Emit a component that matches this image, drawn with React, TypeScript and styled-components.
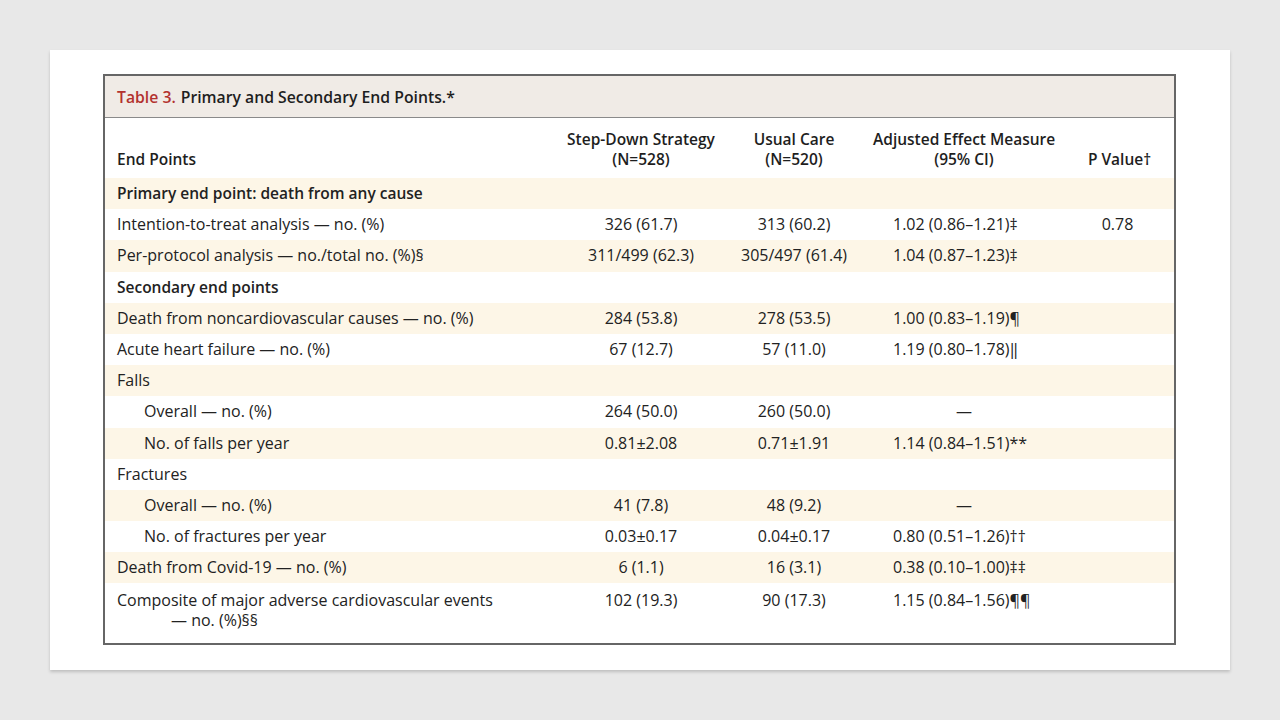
import React from 'react';
import styled, { createGlobalStyle } from 'styled-components';

const GlobalStyle = createGlobalStyle`
    html, body {
        margin: 0;
        padding: 0;
        background: #e8e8e8;
    }
    body {
        font-family: 'Open Sans', 'Noto Sans', sans-serif;
        color: #222222;
    }
`;

const Page = styled.div`
    width: 1280px;
    height: 720px;
    padding: 50px;
    box-sizing: border-box;
    background: #e8e8e8;
`;

const Card = styled.div`
    width: 1180px;
    height: 620px;
    box-sizing: border-box;
    background: #ffffff;
    padding: 24px 54px 0 53px;
    box-shadow: 0 2px 3px rgba(0, 0, 0, 0.18);
`;

const TableBox = styled.div`
    border: 2px solid #666666;
    width: 1073px;
    box-sizing: border-box;
`;

const TitleBar = styled.div`
    height: 41px;
    background: #f0ebe6;
    border-bottom: 1.5px solid #8a8a8a;
    display: flex;
    align-items: center;
    padding-left: 12px;
    font-size: 15.75px;
    font-weight: 600;
    color: #1e1e1e;
`;

const TableNo = styled.span`
    color: #b3322e;
    margin-right: 5px;
`;

const GRID = '462px 148px 158px 182px 119px';

const HeadRow = styled.div`
    display: grid;
    grid-template-columns: ${GRID};
    align-items: end;
    height: 60px;
    box-sizing: border-box;
    padding: 11px 0 9px;
    font-size: 15.5px;
    font-weight: 600;
    line-height: 20px;
    color: #1e1e1e;
`;

const HeadCell = styled.div<{ $center?: boolean; $shift?: number }>`
    text-align: ${(p) => (p.$center ? 'center' : 'left')};
    padding-left: ${(p) => p.$shift ?? 0}px;
    white-space: nowrap;
`;

const Row = styled.div<{ $shade: boolean; $tall?: boolean }>`
    display: grid;
    grid-template-columns: ${GRID};
    align-items: start;
    background: ${(p) => (p.$shade ? '#fdf6e7' : '#ffffff')};
    height: ${(p) => (p.$tall ? '60px' : '31.2px')};
    box-sizing: border-box;
    padding-top: ${(p) => (p.$tall ? '7px' : '0')};
    font-size: 16px;
    line-height: ${(p) => (p.$tall ? '20px' : '31.2px')};
`;

const Label = styled.div<{ $indent?: boolean; $bold?: boolean }>`
    padding-left: ${(p) => (p.$indent ? 39 : 12)}px;
    font-weight: ${(p) => (p.$bold ? 600 : 400)};
    font-size: ${(p) => (p.$bold ? '15.5px' : 'inherit')};
    white-space: nowrap;
`;

const Wrapped = styled.span`
    display: block;
    padding-left: 54px;
`;

const Num = styled.div`
    text-align: center;
    white-space: nowrap;
`;

const Effect = styled.div<{ $dash?: boolean }>`
    text-align: ${(p) => (p.$dash ? 'center' : 'left')};
    padding-left: ${(p) => (p.$dash ? 0 : 20)}px;
    white-space: nowrap;
`;

const PVal = styled.div`
    text-align: center;
    padding-left: 6px;
`;

type Line = {
    label: string;
    indent?: boolean;
    bold?: boolean;
    a?: string;
    b?: string;
    effect?: string;
    p?: string;
    wrap?: string;
};

const lines: Line[] = [
    { label: 'Primary end point: death from any cause', bold: true },
    { label: 'Intention-to-treat analysis — no. (%)', a: '326 (61.7)', b: '313 (60.2)', effect: '1.02 (0.86–1.21)‡', p: '0.78' },
    { label: 'Per-protocol analysis — no./total no. (%)§', a: '311/499 (62.3)', b: '305/497 (61.4)', effect: '1.04 (0.87–1.23)‡' },
    { label: 'Secondary end points', bold: true },
    { label: 'Death from noncardiovascular causes — no. (%)', a: '284 (53.8)', b: '278 (53.5)', effect: '1.00 (0.83–1.19)¶' },
    { label: 'Acute heart failure — no. (%)', a: '67 (12.7)', b: '57 (11.0)', effect: '1.19 (0.80–1.78)‖' },
    { label: 'Falls' },
    { label: 'Overall — no. (%)', indent: true, a: '264 (50.0)', b: '260 (50.0)', effect: '—' },
    { label: 'No. of falls per year', indent: true, a: '0.81±2.08', b: '0.71±1.91', effect: '1.14 (0.84–1.51)**' },
    { label: 'Fractures' },
    { label: 'Overall — no. (%)', indent: true, a: '41 (7.8)', b: '48 (9.2)', effect: '—' },
    { label: 'No. of fractures per year', indent: true, a: '0.03±0.17', b: '0.04±0.17', effect: '0.80 (0.51–1.26)††' },
    { label: 'Death from Covid-19 — no. (%)', a: '6 (1.1)', b: '16 (3.1)', effect: '0.38 (0.10–1.00)‡‡' },
    {
        label: 'Composite of major adverse cardiovascular events',
        wrap: '— no. (%)§§',
        a: '102 (19.3)',
        b: '90 (17.3)',
        effect: '1.15 (0.84–1.56)¶¶',
    },
];

export default function App() {
    return (
        <Page>
            <GlobalStyle />
            <Card>
                <TableBox>
                    <TitleBar>
                        <TableNo>Table 3.</TableNo> Primary and Secondary End Points.*
                    </TitleBar>
                    <HeadRow>
                        <HeadCell $shift={12}>End Points</HeadCell>
                        <HeadCell $center>
                            Step-Down Strategy
                            <br />
                            (N=528)
                        </HeadCell>
                        <HeadCell $center>
                            Usual Care
                            <br />
                            (N=520)
                        </HeadCell>
                        <HeadCell $center>
                            Adjusted Effect Measure
                            <br />
                            (95% CI)
                        </HeadCell>
                        <HeadCell $center $shift={10}>
                            P Value†
                        </HeadCell>
                    </HeadRow>
                    {lines.map((l, i) => (
                        <Row key={i} $shade={i % 2 === 0} $tall={!!l.wrap}>
                            <Label $indent={l.indent} $bold={l.bold}>
                                {l.label}
                                {l.wrap && <Wrapped>{l.wrap}</Wrapped>}
                            </Label>
                            <Num>{l.a}</Num>
                            <Num>{l.b}</Num>
                            <Effect $dash={l.effect === '—'}>{l.effect}</Effect>
                            <PVal>{l.p}</PVal>
                        </Row>
                    ))}
                </TableBox>
            </Card>
        </Page>
    );
}
